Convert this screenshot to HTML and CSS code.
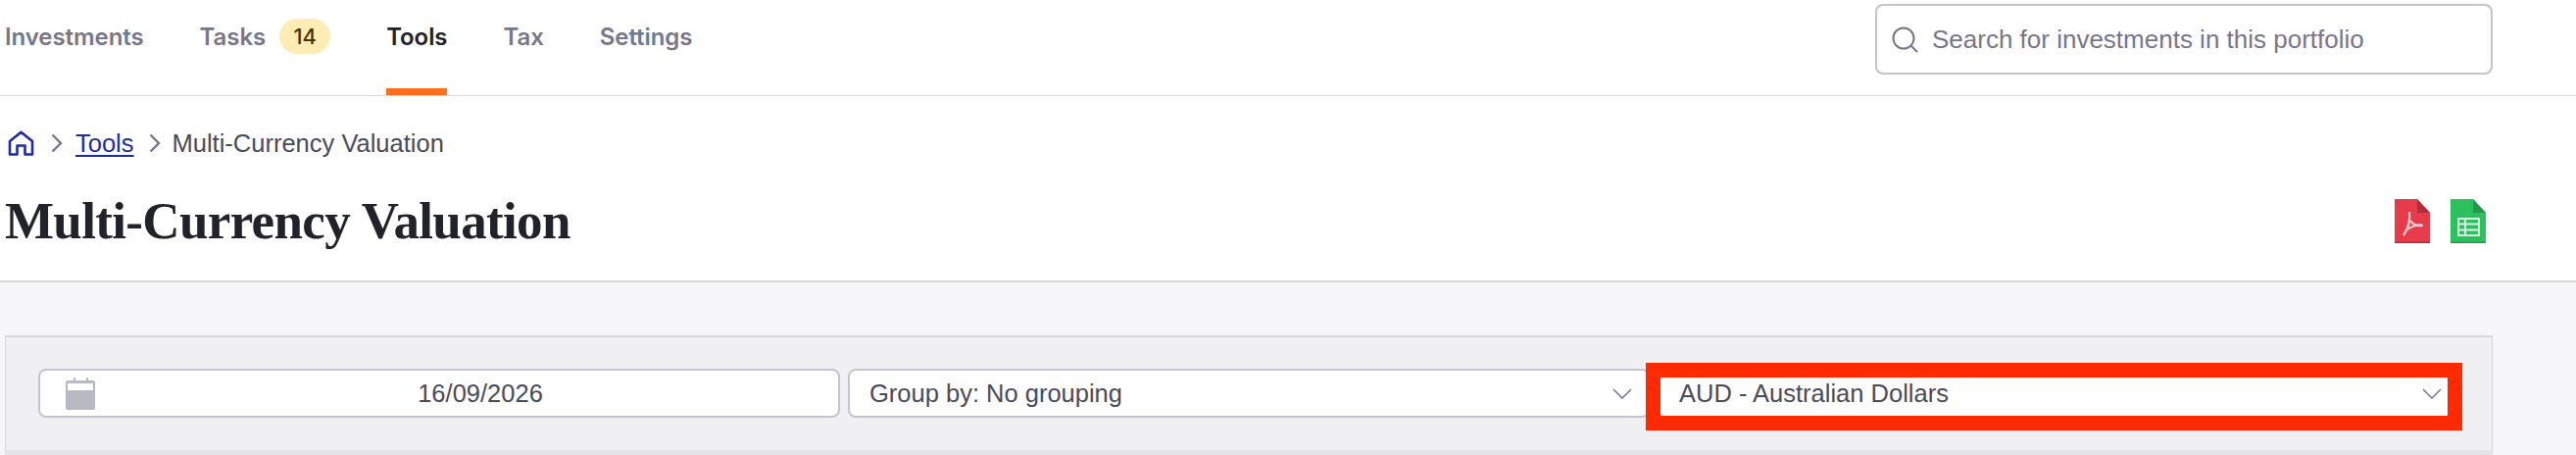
FILE: index.html
```html
<!DOCTYPE html>
<html lang="en">
<head>
    <meta charset="UTF-8">
    <meta name="viewport" content="width=device-width, initial-scale=1.0">
    <title>Multi-Currency Valuation</title>
    <link rel="stylesheet" href="styles.css">
</head>
<body>
    <header class="topbar">
        <nav class="tabs">
            <a class="tab">Investments</a>
            <a class="tab">Tasks <span class="badge">14</span></a>
            <a class="tab tab-active">Tools</a>
            <a class="tab">Tax</a>
            <a class="tab">Settings</a>
        </nav>
        <div class="search">
            <svg class="search-icon" viewBox="0 0 27 27" width="27" height="27" fill="none" stroke="#77768a" stroke-width="2">
                <circle cx="12" cy="12" r="10.5"/>
                <path d="M19.5 19.5L26 26"/>
            </svg>
            <span>Search for investments in this portfolio</span>
        </div>
    </header>

    <section class="title-area">
        <div class="breadcrumb">
            <svg viewBox="0 0 27 26" width="27" height="26" fill="none" stroke="#1e2aa8" stroke-width="2.6" stroke-linejoin="round">
                <path d="M2 11L13.5 1.8L25 11V24.5H17.5V15.5H9.5V24.5H2Z"/>
            </svg>
            <svg class="crumb-sep" viewBox="0 0 12 20" width="12" height="20" fill="none" stroke="#77768a" stroke-width="2.4"><path d="M1.5 1.5L10 10L1.5 18.5"/></svg>
            <a class="crumb-link">Tools</a>
            <svg class="crumb-sep crumb-sep-last" viewBox="0 0 12 20" width="12" height="20" fill="none" stroke="#77768a" stroke-width="2.4"><path d="M1.5 1.5L10 10L1.5 18.5"/></svg>
            <span>Multi-Currency Valuation</span>
        </div>
        <div class="title-row">
            <h1>Multi-Currency Valuation</h1>
            <div class="exports">
                <svg viewBox="0 0 36 45" width="36" height="45">
                    <path d="M0 0H23L36 14V45H0Z" fill="#e73a4a"/>
                    <path d="M23 0L36 14H23Z" fill="#b52c3a"/>
                    <path d="M0 43.5H36V45H0Z" fill="#b52c3a"/>
                    <path d="M15 13C16 22 14 30 9 37M16 22C18 26 24 28 29 27M11 32C17 28 22 26 28 26" fill="none" stroke="#f8cdd2" stroke-width="2.2"/>
                </svg>
                <svg viewBox="0 0 36 45" width="36" height="45">
                    <path d="M0 0H23L36 14V45H0Z" fill="#2cc05f"/>
                    <path d="M23 0L36 14H23Z" fill="#22994b"/>
                    <path d="M0 43.5H36V45H0Z" fill="#22994b"/>
                    <path d="M8 20H29V37H8ZM8 25.5H29M8 31.5H29M15 20V37" fill="none" stroke="#d6f5e0" stroke-width="2"/>
                </svg>
            </div>
        </div>
    </section>

    <main class="content">
        <div class="filters">
            <div class="field field-date">
                <svg viewBox="0 0 30 33" width="30" height="33">
                    <path d="M9 0V4M22 0V4" stroke="#b9b9c4" stroke-width="2"/>
                    <rect y="3" width="30" height="30" rx="2" fill="#b9b9c4"/>
                    <rect x="2" y="6" width="26" height="7" fill="#fff"/>
                </svg>
                <span class="date-value">16/09/2026</span>
            </div>
            <div class="field">
                <span>Group by: No grouping</span>
                <svg class="caret" viewBox="0 0 20 11" width="20" height="11" fill="none" stroke="#77768a" stroke-width="1.5"><path d="M1 1L10 10L19 1"/></svg>
            </div>
            <div class="field field-marked">
                <span>AUD - Australian Dollars</span>
                <svg class="caret" viewBox="0 0 20 11" width="20" height="11" fill="none" stroke="#77768a" stroke-width="1.5"><path d="M1 1L10 10L19 1"/></svg>
                <div class="highlight"></div>
            </div>
        </div>
    </main>
</body>
</html>
```

FILE: styles.css
```css
html, body {
    height: 100%;
}

body {
    margin: 0;
    font-family: "Liberation Sans", Arial, sans-serif;
    font-size: 26px;
    color: #4a4a58;
    background-color: #f7f7f9;
    overflow: hidden;
}

.topbar {
    display: flex;
    justify-content: space-between;
    height: 97px;
    padding: 0 85px 0 5px;
    background-color: #ffffff;
    border-bottom: 1px solid #d8d8dc;
}

.tabs {
    display: flex;
    gap: 57px;
}

.tab {
    display: flex;
    align-items: center;
    gap: 14px;
    height: 97px;
    padding-bottom: 16px;
    box-sizing: border-box;
    border-bottom: 7px solid transparent;
    color: #77768a;
    font-family: Inter, "Liberation Sans", sans-serif;
    font-size: 24px;
    font-weight: 600;
    letter-spacing: -0.07px;
}

.tab-active {
    color: #22222a;
    border-bottom-color: #ff6f1f;
}

.badge {
    display: flex;
    align-items: center;
    justify-content: center;
    width: 52px;
    height: 36px;
    border-radius: 18px;
    background-color: #feecb5;
    color: #4a3500;
    font-size: 22px;
    font-weight: 500;
}

.search {
    display: flex;
    align-items: center;
    gap: 14px;
    box-sizing: border-box;
    width: 630px;
    height: 72px;
    margin-top: 4px;
    padding-left: 15px;
    border: 2px solid #c4c4ce;
    border-radius: 8px;
    color: #77768a;
}

.title-area {
    height: 190px;
    box-sizing: border-box;
    padding: 34px 92px 0 5px;
    background-color: #ffffff;
    border-bottom: 2px solid #d8d8dc;
}

.breadcrumb {
    display: flex;
    align-items: center;
    height: 28px;
    margin-left: 3px;
    font-size: 25.5px;
}

.crumb-sep {
    margin: 0 13px 0 17px;
}

.crumb-sep-last {
    margin: 0 12px 0 15px;
}

.crumb-link {
    color: #1e2aa8;
    text-decoration: underline;
    text-underline-offset: 3px;
}

.title-row {
    display: flex;
    justify-content: space-between;
    align-items: center;
    margin-top: 35px;
}

h1 {
    margin: 0;
    font-family: "Liberation Serif", serif;
    font-size: 53px;
    line-height: 60px;
    font-weight: 700;
    letter-spacing: -0.65px;
    color: #22222a;
}

.exports {
    display: flex;
    gap: 21px;
}

.content {
    padding: 54px 85px 0 5px;
}

.filters {
    display: grid;
    grid-template-columns: repeat(3, 1fr);
    gap: 8px;
    padding: 32px 33px 33px;
    background-color: #f0f0f3;
    border: 1px solid #d8d8dc;
    border-top-width: 2px;
    border-bottom: 6px solid #e4e4e9;
}

.field {
    position: relative;
    display: flex;
    align-items: center;
    justify-content: space-between;
    box-sizing: border-box;
    height: 50px;
    padding: 0 16px 0 20px;
    background-color: #ffffff;
    border: 2px solid #c4c4ce;
    border-radius: 8px;
    font-size: 25.5px;
}

.field-date {
    justify-content: flex-start;
    padding-left: 26px;
}

.date-value {
    flex: 1;
    text-align: center;
    padding-left: 44px;
}

.highlight {
    position: absolute;
    top: -8px;
    right: -5px;
    bottom: -15px;
    left: -14px;
    border: 15px solid #ff2a00;
}
```
